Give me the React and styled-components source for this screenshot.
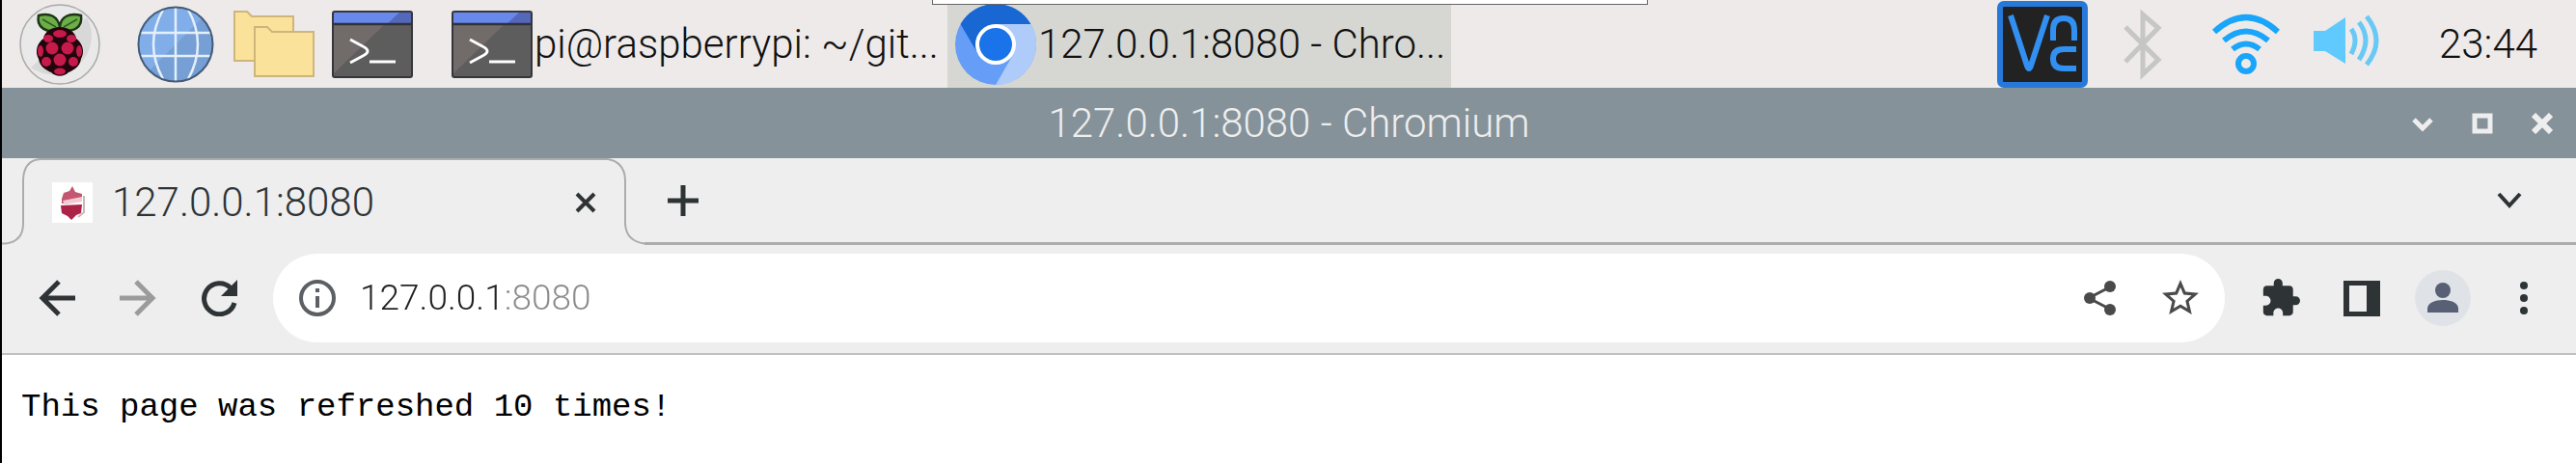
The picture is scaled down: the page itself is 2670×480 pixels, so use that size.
import React from 'react';
import styled, { createGlobalStyle } from 'styled-components';

const Global = createGlobalStyle`
  * { box-sizing: border-box; }
  body { margin: 0; background: #fff; font-family: Roboto, "Noto Sans", sans-serif; font-weight: 300; }
  button { margin: 0; padding: 0; border: 0; background: none; font: inherit; color: inherit; }
  svg { display: block; flex: none; }
`;

const Desktop = styled.div`
  position: relative;
  min-height: 100vh;
  border-left: 2px solid #000;
  background: #fff;
`;

const Popup = styled.div`
  position: absolute;
  top: 0;
  left: 964px;
  width: 742px;
  height: 5px;
  background: #fff;
  border: 1px solid #666;
  border-top: 0;
`;

const Panel = styled.header`
  display: flex;
  align-items: center;
  height: 91px;
  background: #eeeae9;
  color: #111;
`;

const Launchers = styled.nav`
  display: flex;
  align-items: center;
  margin-right: 14px;
`;

const PanelButton = styled.button`
  display: flex;
  align-items: center;
  justify-content: center;
  width: ${(p) => p.$width}px;
  height: 90px;
`;

const Task = styled.button`
  display: flex;
  align-items: center;
  gap: 2px;
  width: 522px;
  height: 91px;
  padding-left: 8px;
  background: ${(p) => (p.$active ? '#d6d7d2' : 'transparent')};
  font-size: 42px;
  line-height: 52px;
  white-space: nowrap;
`;

const Tray = styled.div`
  display: flex;
  align-items: center;
  margin-left: auto;
  padding-right: 42px;
`;

const Clock = styled.time`
  width: 100px;
  margin-left: 42px;
  font-size: 42px;
  line-height: 52px;
  text-align: center;
`;

const TitleBar = styled.div`
  display: grid;
  grid-template-columns: 1fr auto 1fr;
  align-items: center;
  height: 73px;
  padding: 0 24px;
  background: #859299;
  color: #eee;
`;

const WindowTitle = styled.h1`
  grid-column: 2;
  margin: 0;
  font-size: 42px;
  font-weight: 300;
  line-height: 52px;
`;

const WindowButtons = styled.div`
  display: flex;
  justify-content: flex-end;
  gap: 40px;
`;

const TabStrip = styled.div`
  display: flex;
  height: 90px;
  background: #eee;
  color: #2e3436;
`;

const TabEdge = styled.svg`
  width: ${(p) => p.$width}px;
  height: 90px;
`;

const Tab = styled.div`
  display: flex;
  align-items: center;
  width: 588px;
  height: 90px;
  padding: 0 12px;
  border-top: 2px solid #acacac;
  font-size: 42px;
  line-height: 52px;
`;

const TabName = styled.span`
  flex: 1;
  padding-left: 20px;
`;

const StripRest = styled.div`
  display: flex;
  flex: 1;
  align-items: center;
  justify-content: space-between;
  padding: 0 56px 0 24px;
  border-bottom: 3px solid #acacac;
`;

const Toolbar = styled.div`
  display: flex;
  align-items: center;
  height: 114px;
  padding: 0 28px 2px 31px;
  background: #eee;
  border-bottom: 2px solid #c0c0c0;
`;

const NavButtons = styled.div`
  display: flex;
  gap: 32px;
  margin-right: 30px;
`;

const IconButton = styled.button`
  display: flex;
  align-items: center;
  justify-content: center;
  width: 52px;
  height: 60px;
  color: ${(p) => p.$color || '#2e3436'};
`;

const AddressBar = styled.form`
  display: flex;
  flex: 1;
  align-items: center;
  height: 92px;
  padding: 0 20px;
  border-radius: 46px;
  background: #fff;
`;

const Address = styled.input`
  flex: 1;
  min-width: 0;
  margin: 0 0 0 18px;
  padding: 0;
  border: 0;
  outline: 0;
  background: linear-gradient(90deg, #222 149px, #8c8c8c 149px);
  background-clip: text;
  color: transparent;
  font: inherit;
  font-size: 37px;
  line-height: 46px;
`;

const AddressActions = styled.div`
  display: flex;
  gap: 32px;
`;

const Actions = styled.div`
  display: flex;
  gap: 32px;
  margin-left: 32px;
`;

const Page = styled.main`
  padding: 32px 20px;
`;

const Message = styled.pre`
  margin: 0;
  font: 400 34px/44px "Liberation Mono", monospace;
  color: #000;
`;

const Raspberry = () => (
  <svg width="84" height="84" viewBox="0 0 84 84">
    <circle cx="42" cy="42" r="41" fill="#e9e9e9" stroke="#aaa" strokeWidth="1.5" />
    <path d="M12 66A40 40 0 0 0 70 14Z" fill="#d8d8d8" />
    <path d="M40 28C29 30 17 25 20 12c12-3 20 1 22 12C43 13 52 9 64 12c2 13-8 17-20 16z" fill="#6cae48" stroke="#1d3514" strokeWidth="2.5" />
    <path d="M24 16l14 8M60 16l-14 8" stroke="#315d22" strokeWidth="1.5" />
    <path d="M42 24c9 0 16 5 17 12 7 5 9 14 5 21-1 8-8 12-13 14-5 5-13 5-18 0-5-2-12-6-13-14-4-7-2-16 5-21 1-7 8-12 17-12z" fill="#22040d" />
    <g fill="#c51a4a">
      <ellipse cx="42" cy="31" rx="7" ry="4" /><ellipse cx="30" cy="36" rx="5" ry="4" /><ellipse cx="54" cy="36" rx="5" ry="4" />
      <circle cx="34" cy="46" r="6.5" /><circle cx="50" cy="46" r="6.5" /><ellipse cx="22" cy="49" rx="3" ry="6" /><ellipse cx="62" cy="49" rx="3" ry="6" />
      <circle cx="42" cy="58" r="6.500" /><circle cx="28" cy="60" r="5" /><circle cx="56" cy="60" r="5" /><ellipse cx="42" cy="70" rx="6" ry="3.500" />
    </g>
  </svg>
);

const Globe = () => (
  <svg width="80" height="80" viewBox="0 0 80 80">
    <circle cx="40" cy="40" r="38" fill="#81aee9" />
    <path d="M13 67A38 38 0 0 0 67 13Z" fill="#759fd5" />
    <g fill="none" stroke="#e4effb" strokeWidth="2.5"><path d="M40 2v76M4 28h72M4 52h72M27 4Q7 40 27 76M53 4Q73 40 53 76" /></g>
    <circle cx="40" cy="40" r="38.5" fill="none" stroke="#425b77" strokeWidth="2" />
  </svg>
);

const Folders = () => (
  <svg width="84" height="70" viewBox="0 0 84 70" fill="#fbe29b" stroke="#cdb57c" strokeWidth="2">
    <path d="M1 1h13l5 5h43v46H1z" />
    <path d="M22 17h13l5 5h43v46H22z" />
  </svg>
);

const Terminal = () => (
  <svg width="84" height="70" viewBox="0 0 84 70">
    <rect x="1" y="1" width="82" height="68" rx="2" fill="#5d5d5d" />
    <path d="M1 14h54L1 66z" fill="#716b6a" />
    <path d="M1 1h82v13H1z" fill="#6888ec" />
    <path d="M71 1h12v13H57z" fill="#5468bb" />
    <path d="M1 14h82" stroke="#303238" strokeWidth="2.5" />
    <rect x="1" y="1" width="82" height="68" rx="2" fill="none" stroke="#35363b" strokeWidth="2" />
    <path d="M19 30l13 7q10 5 0 10l-13 7M39 53h27" fill="none" stroke="#fff" strokeWidth="3" />
  </svg>
);

const ChromiumLogo = () => (
  <svg width="84" height="84" viewBox="0 0 84 84">
    <circle cx="42" cy="42" r="42" fill="#669df6" />
    <path d="M42 84A42 42 0 0 0 78.400 21H42L60 52.500z" fill="#aecbfa" />
    <path d="M5.600 21A42 42 0 0 1 78.400 21H42A21 21 0 0 0 24 52.500z" fill="#1967d2" />
    <circle cx="42" cy="42" r="21" fill="#fff" />
    <circle cx="42" cy="42" r="17" fill="#1a73e8" />
  </svg>
);

const VncLogo = () => (
  <svg width="94" height="90" viewBox="0 0 94 90" fill="none" stroke="#3390f3" strokeWidth="6">
    <rect x="3" y="3" width="88" height="84" rx="4" fill="#222" stroke="#2779d9" strokeWidth="6" />
    <path d="M14 15l17 52q2 6 4 0L52 15" />
    <path d="M58 41V30q0-12 11-12t11 12v11M82 50H69q-11 0-11 10t11 10h13" />
  </svg>
);

const Bluetooth = () => (
  <svg width="40" height="74" viewBox="0 0 40 74" fill="none" stroke="#c6c6c6" strokeWidth="5">
    <path d="M2 19l34 34-16 15V6l16 14L2 55" />
  </svg>
);

const Wifi = () => (
  <svg width="70" height="64" viewBox="0 0 70 64" fill="none" stroke="#18a5fb" strokeWidth="6">
    <path d="M2 19Q35-11 68 19M12 28Q35 9 58 28M21 37Q35 26 49 37" />
    <ellipse cx="35" cy="52" rx="8" ry="8" />
  </svg>
);

const Speaker = () => (
  <svg width="70" height="62" viewBox="0 0 70 62" fill="none" stroke="#69c9f6" strokeWidth="5">
    <path d="M1 17h12L34 3v48L13 38H1z" fill="#60caff" stroke="none" />
    <path d="M40 15q8 11 0 26M48 8q14 18 0 39M56 2q20 25 0 50" />
  </svg>
);

const Favicon = () => (
  <svg width="42" height="42" viewBox="0 0 42 42">
    <path fill="#fff" d="M0 0h42v42H0z" />
    <path d="M21 4l3 6 7 2v7l-21 3v-5l2-6 6-2z" fill="#c4576f" />
    <path d="M11 19l20-4v5l-18 3z" fill="#f2c9d3" />
    <path d="M9 24l22-1-1 9-5 2-5 5-4-4-6-3z" fill="#ad2247" />
    <path d="M33 14v17l-6 5" stroke="#c9b7bb" strokeWidth="2" fill="none" />
  </svg>
);

const Glyph = ({ w = 36, h = 36, d, stroke = 4, box = `0 0 ${w} ${h}`, fill = 'none' }) => (
  <svg width={w} height={h} viewBox={box} fill={fill} stroke={fill === 'none' ? 'currentColor' : 'none'} strokeWidth={stroke}>
    <path d={d} />
  </svg>
);

export default function App() {
  return (
    <>
      <Global />
      <Desktop>
        <Panel>
          <Launchers>
            <PanelButton $width={120} aria-label="Menu"><Raspberry /></PanelButton>
            <PanelButton $width={120} aria-label="Web browser"><Globe /></PanelButton>
            <PanelButton $width={84} aria-label="File manager"><Folders /></PanelButton>
            <PanelButton $width={120} aria-label="Terminal"><Terminal /></PanelButton>
          </Launchers>
          <Task><Terminal />pi@raspberrypi: ~/git...</Task>
          <Task $active><ChromiumLogo />127.0.0.1:8080 - Chro...</Task>
          <Tray>
            <PanelButton $width={94} aria-label="VNC"><VncLogo /></PanelButton>
            <PanelButton $width={114} aria-label="Bluetooth"><Bluetooth /></PanelButton>
            <PanelButton $width={100} aria-label="Network"><Wifi /></PanelButton>
            <PanelButton $width={108} aria-label="Volume"><Speaker /></PanelButton>
            <Clock>23:44</Clock>
          </Tray>
        </Panel>
        <TitleBar>
          <WindowTitle>127.0.0.1:8080 - Chromium</WindowTitle>
          <WindowButtons>
            <button aria-label="Minimise"><Glyph w={22} h={22} stroke={5} d="M2 7l9 9 9-9" /></button>
            <button aria-label="Maximise"><Glyph w={22} h={22} stroke={5} d="M3 3h16v16H3z" /></button>
            <button aria-label="Close"><Glyph w={22} h={22} stroke={6} d="M2 2l18 18M20 2L2 20" /></button>
          </WindowButtons>
        </TitleBar>
        <TabStrip>
          <TabEdge $width={40} viewBox="0 0 40 90" fill="none" stroke="#acacac" strokeWidth="2">
            <path d="M0 88.500H4Q22 86 22 68V22Q23 2 40 1" />
          </TabEdge>
          <Tab>
            <Favicon />
            <TabName>127.0.0.1:8080</TabName>
            <button aria-label="Close tab"><Glyph w={22} h={22} stroke={4} d="M2 2l18 18M20 2L2 20" /></button>
          </Tab>
          <TabEdge $width={38} viewBox="0 0 38 90" fill="none" stroke="#acacac" strokeWidth="2">
            <path d="M0 1Q17 4 18 22V68Q19 86 38 88.500" />
          </TabEdge>
          <StripRest>
            <button aria-label="New tab"><Glyph w={32} h={32} stroke={5} d="M16 0v32M0 16h32" /></button>
            <button aria-label="Search tabs"><Glyph w={26} h={18} stroke={4} d="M2 2l11 12L24 2" /></button>
          </StripRest>
        </TabStrip>
        <Toolbar>
          <NavButtons>
            <IconButton aria-label="Back"><Glyph w={38} h={38} stroke={5} d="M21 2L4 19l17 17M4 19h34" /></IconButton>
            <IconButton aria-label="Forward" $color="#9b9b9b"><Glyph w={38} h={38} stroke={5} d="M17 2l17 17-17 17M34 19H0" /></IconButton>
            <IconButton aria-label="Reload">
              <svg width="38" height="38" viewBox="0 0 38 38"><path d="M35 24A16 16 0 1 1 31 8.500" fill="none" stroke="currentColor" strokeWidth="5" /><path d="M38 0v17H21z" fill="currentColor" /></svg>
            </IconButton>
          </NavButtons>
          <AddressBar>
            <IconButton type="button" aria-label="Site information" $color="#5c5f63">
              <Glyph w={38} h={38} d="M19 2a17 17 0 1 0 0 34a17 17 0 1 0 0-34zM19 17v12M19 9v4" />
            </IconButton>
            <Address aria-label="Address" defaultValue="127.0.0.1:8080" />
            <AddressActions>
              <IconButton type="button" aria-label="Share" $color="#4a4a4a">
                <svg width="36" height="38" viewBox="0 0 36 38" fill="currentColor"><path d="M30 7L7 19l23 12" fill="none" stroke="currentColor" strokeWidth="3" /><circle cx="8" cy="19" r="6" /><circle cx="29" cy="7" r="6" /><circle cx="29" cy="31" r="6" /></svg>
              </IconButton>
              <IconButton type="button" aria-label="Bookmark" $color="#4a4a4a">
                <Glyph w={38} h={38} box="2 2 20 20" fill="currentColor" d="M22 9.240l-7.190-.62L12 2 9.190 8.630 2 9.240l5.460 4.730L5.820 21 12 17.270 18.180 21l-1.630-7.030L22 9.240zM12 15.400l-3.760 2.270 1-4.280-3.320-2.880 4.380-.38L12 6.100l1.710 4.040 4.380.38-3.320 2.880 1 4.280L12 15.400z" />
              </IconButton>
            </AddressActions>
          </AddressBar>
          <Actions>
            <IconButton aria-label="Extensions">
              <Glyph w={40} h={40} box="1 1 22 22" fill="currentColor" d="M20.500 11H19V7c0-1.100-.9-2-2-2h-4V3.500a2.500 2.500 0 0 0-5 0V5H4c-1.100 0-1.990.9-1.990 2v3.800H3.500c1.490 0 2.700 1.210 2.700 2.700s-1.210 2.700-2.700 2.700H2V20c0 1.100.9 2 2 2h3.800v-1.500c0-1.490 1.210-2.700 2.700-2.700s2.700 1.210 2.700 2.700V22H17c1.100 0 2-.9 2-2v-4h1.500a2.500 2.500 0 0 0 0-5z" />
            </IconButton>
            <IconButton aria-label="Side panel">
              <svg width="38" height="37" viewBox="0 0 38 37"><path fill="currentColor" fillRule="evenodd" d="M0 0h38v37H0zM6 5v27h18V5z" /></svg>
            </IconButton>
            <IconButton aria-label="Profile">
              <svg width="58" height="58" viewBox="0 0 58 58" fill="#586075"><circle cx="29" cy="29" r="29" fill="#dfe2e7" /><circle cx="29" cy="21" r="8" /><path d="M13 44v-4c0-12 32-12 32 0v4z" /></svg>
            </IconButton>
            <IconButton aria-label="Menu">
              <svg width="10" height="34" viewBox="0 0 10 34" fill="currentColor"><circle cx="5" cy="4" r="4" /><circle cx="5" cy="17" r="4" /><circle cx="5" cy="30" r="4" /></svg>
            </IconButton>
          </Actions>
        </Toolbar>
        <Page><Message>This page was refreshed 10 times!</Message></Page>
        <Popup />
      </Desktop>
    </>
  );
}
